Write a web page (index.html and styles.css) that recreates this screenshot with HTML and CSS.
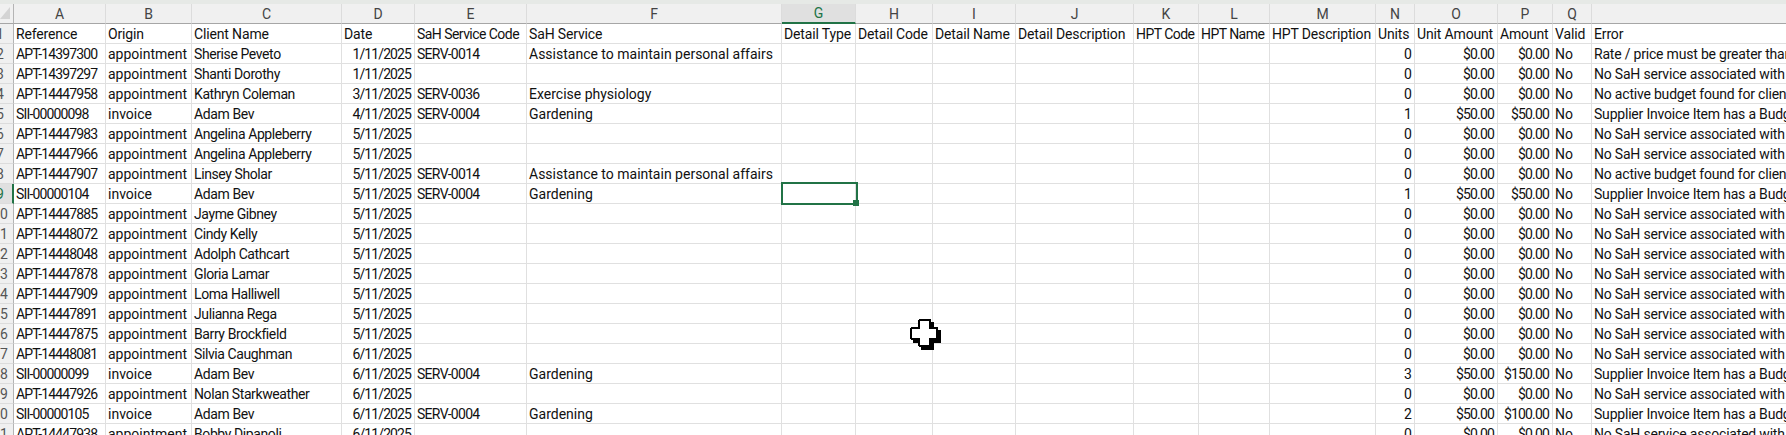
FILE: index.html
```html
<!DOCTYPE html>
<html lang="en">
<head>
<meta charset="utf-8">
<title>Sheet</title>
<link rel="stylesheet" href="styles.css">
</head>
<body>
<div class="band"></div>
<div class="sheet">
<table class="grid">
<colgroup>
<col class="c-rh"><col class="c-a"><col class="c-b"><col class="c-c"><col class="c-d"><col class="c-e"><col class="c-f"><col class="c-g"><col class="c-h"><col class="c-i"><col class="c-j"><col class="c-k"><col class="c-l"><col class="c-m"><col class="c-n"><col class="c-o"><col class="c-p"><col class="c-q"><col class="c-r">
</colgroup>
<thead>
<tr>
<th class="corner"><svg class="tri" width="11" height="13" viewBox="0 0 11 13"><polygon points="10,0 10,12 0,12" fill="#d4d4d4"/></svg></th>
<th>A</th><th>B</th><th>C</th><th>D</th><th>E</th><th>F</th><th class="on">G</th><th>H</th><th>I</th><th>J</th><th>K</th><th>L</th><th>M</th><th>N</th><th>O</th><th>P</th><th>Q</th><th></th>
</tr>
</thead>
<tbody>
<tr><th class="rh"><span>1</span></th><td>Reference</td><td>Origin</td><td>Client Name</td><td>Date</td><td>SaH Service Code</td><td>SaH Service</td><td>Detail Type</td><td>Detail Code</td><td>Detail Name</td><td>Detail Description</td><td>HPT Code</td><td>HPT Name</td><td>HPT Description</td><td>Units</td><td>Unit Amount</td><td>Amount</td><td>Valid</td><td>Error</td></tr>
<tr><th class="rh"><span>2</span></th><td>APT-14397300</td><td>appointment</td><td>Sherise Peveto</td><td class="n">1/11/2025</td><td>SERV-0014</td><td>Assistance to maintain personal affairs</td><td></td><td></td><td></td><td></td><td></td><td></td><td></td><td class="n">0</td><td class="n">$0.00</td><td class="n">$0.00</td><td>No</td><td>Rate / price must be greater than 0</td></tr>
<tr><th class="rh"><span>3</span></th><td>APT-14397297</td><td>appointment</td><td>Shanti Dorothy</td><td class="n">1/11/2025</td><td></td><td></td><td></td><td></td><td></td><td></td><td></td><td></td><td></td><td class="n">0</td><td class="n">$0.00</td><td class="n">$0.00</td><td>No</td><td>No SaH service associated with this item</td></tr>
<tr><th class="rh"><span>4</span></th><td>APT-14447958</td><td>appointment</td><td>Kathryn Coleman</td><td class="n">3/11/2025</td><td>SERV-0036</td><td>Exercise physiology</td><td></td><td></td><td></td><td></td><td></td><td></td><td></td><td class="n">0</td><td class="n">$0.00</td><td class="n">$0.00</td><td>No</td><td>No active budget found for client</td></tr>
<tr><th class="rh"><span>5</span></th><td>SII-00000098</td><td>invoice</td><td>Adam Bev</td><td class="n">4/11/2025</td><td>SERV-0004</td><td>Gardening</td><td></td><td></td><td></td><td></td><td></td><td></td><td></td><td class="n">1</td><td class="n">$50.00</td><td class="n">$50.00</td><td>No</td><td>Supplier Invoice Item has a Budget</td></tr>
<tr><th class="rh"><span>6</span></th><td>APT-14447983</td><td>appointment</td><td>Angelina Appleberry</td><td class="n">5/11/2025</td><td></td><td></td><td></td><td></td><td></td><td></td><td></td><td></td><td></td><td class="n">0</td><td class="n">$0.00</td><td class="n">$0.00</td><td>No</td><td>No SaH service associated with this item</td></tr>
<tr><th class="rh"><span>7</span></th><td>APT-14447966</td><td>appointment</td><td>Angelina Appleberry</td><td class="n">5/11/2025</td><td></td><td></td><td></td><td></td><td></td><td></td><td></td><td></td><td></td><td class="n">0</td><td class="n">$0.00</td><td class="n">$0.00</td><td>No</td><td>No SaH service associated with this item</td></tr>
<tr><th class="rh"><span>8</span></th><td>APT-14447907</td><td>appointment</td><td>Linsey Sholar</td><td class="n">5/11/2025</td><td>SERV-0014</td><td>Assistance to maintain personal affairs</td><td></td><td></td><td></td><td></td><td></td><td></td><td></td><td class="n">0</td><td class="n">$0.00</td><td class="n">$0.00</td><td>No</td><td>No active budget found for client</td></tr>
<tr><th class="rh active"><span>9</span></th><td>SII-00000104</td><td>invoice</td><td>Adam Bev</td><td class="n">5/11/2025</td><td>SERV-0004</td><td>Gardening</td><td class="sel"><div class="selbox"><div class="handle"></div></div></td><td></td><td></td><td></td><td></td><td></td><td></td><td class="n">1</td><td class="n">$50.00</td><td class="n">$50.00</td><td>No</td><td>Supplier Invoice Item has a Budget</td></tr>
<tr><th class="rh"><span>10</span></th><td>APT-14447885</td><td>appointment</td><td>Jayme Gibney</td><td class="n">5/11/2025</td><td></td><td></td><td></td><td></td><td></td><td></td><td></td><td></td><td></td><td class="n">0</td><td class="n">$0.00</td><td class="n">$0.00</td><td>No</td><td>No SaH service associated with this item</td></tr>
<tr><th class="rh"><span>11</span></th><td>APT-14448072</td><td>appointment</td><td>Cindy Kelly</td><td class="n">5/11/2025</td><td></td><td></td><td></td><td></td><td></td><td></td><td></td><td></td><td></td><td class="n">0</td><td class="n">$0.00</td><td class="n">$0.00</td><td>No</td><td>No SaH service associated with this item</td></tr>
<tr><th class="rh"><span>12</span></th><td>APT-14448048</td><td>appointment</td><td>Adolph Cathcart</td><td class="n">5/11/2025</td><td></td><td></td><td></td><td></td><td></td><td></td><td></td><td></td><td></td><td class="n">0</td><td class="n">$0.00</td><td class="n">$0.00</td><td>No</td><td>No SaH service associated with this item</td></tr>
<tr><th class="rh"><span>13</span></th><td>APT-14447878</td><td>appointment</td><td>Gloria Lamar</td><td class="n">5/11/2025</td><td></td><td></td><td></td><td></td><td></td><td></td><td></td><td></td><td></td><td class="n">0</td><td class="n">$0.00</td><td class="n">$0.00</td><td>No</td><td>No SaH service associated with this item</td></tr>
<tr><th class="rh"><span>14</span></th><td>APT-14447909</td><td>appointment</td><td>Loma Halliwell</td><td class="n">5/11/2025</td><td></td><td></td><td></td><td></td><td></td><td></td><td></td><td></td><td></td><td class="n">0</td><td class="n">$0.00</td><td class="n">$0.00</td><td>No</td><td>No SaH service associated with this item</td></tr>
<tr><th class="rh"><span>15</span></th><td>APT-14447891</td><td>appointment</td><td>Julianna Rega</td><td class="n">5/11/2025</td><td></td><td></td><td></td><td></td><td></td><td></td><td></td><td></td><td></td><td class="n">0</td><td class="n">$0.00</td><td class="n">$0.00</td><td>No</td><td>No SaH service associated with this item</td></tr>
<tr><th class="rh"><span>16</span></th><td>APT-14447875</td><td>appointment</td><td>Barry Brockfield</td><td class="n">5/11/2025</td><td></td><td></td><td></td><td></td><td></td><td></td><td></td><td></td><td></td><td class="n">0</td><td class="n">$0.00</td><td class="n">$0.00</td><td>No</td><td>No SaH service associated with this item</td></tr>
<tr><th class="rh"><span>17</span></th><td>APT-14448081</td><td>appointment</td><td>Silvia Caughman</td><td class="n">6/11/2025</td><td></td><td></td><td></td><td></td><td></td><td></td><td></td><td></td><td></td><td class="n">0</td><td class="n">$0.00</td><td class="n">$0.00</td><td>No</td><td>No SaH service associated with this item</td></tr>
<tr><th class="rh"><span>18</span></th><td>SII-00000099</td><td>invoice</td><td>Adam Bev</td><td class="n">6/11/2025</td><td>SERV-0004</td><td>Gardening</td><td></td><td></td><td></td><td></td><td></td><td></td><td></td><td class="n">3</td><td class="n">$50.00</td><td class="n">$150.00</td><td>No</td><td>Supplier Invoice Item has a Budget</td></tr>
<tr><th class="rh"><span>19</span></th><td>APT-14447926</td><td>appointment</td><td>Nolan Starkweather</td><td class="n">6/11/2025</td><td></td><td></td><td></td><td></td><td></td><td></td><td></td><td></td><td></td><td class="n">0</td><td class="n">$0.00</td><td class="n">$0.00</td><td>No</td><td>No SaH service associated with this item</td></tr>
<tr><th class="rh"><span>20</span></th><td>SII-00000105</td><td>invoice</td><td>Adam Bev</td><td class="n">6/11/2025</td><td>SERV-0004</td><td>Gardening</td><td></td><td></td><td></td><td></td><td></td><td></td><td></td><td class="n">2</td><td class="n">$50.00</td><td class="n">$100.00</td><td>No</td><td>Supplier Invoice Item has a Budget</td></tr>
<tr><th class="rh"><span>21</span></th><td>APT-14447938</td><td>appointment</td><td>Bobby Dipanoli</td><td class="n">6/11/2025</td><td></td><td></td><td></td><td></td><td></td><td></td><td></td><td></td><td></td><td class="n">0</td><td class="n">$0.00</td><td class="n">$0.00</td><td>No</td><td>No SaH service associated with this item</td></tr>
</tbody>
</table>
<svg class="cursor" width="31" height="31" viewBox="0 0 31 31" shape-rendering="crispEdges">
<polygon fill="#000" points="11,3 24,3 24,11 31,11 31,24 24,24 24,31 11,31 11,24 3,24 3,11 11,11"/>
<polygon fill="#000" points="9,0 20,0 21,1 21,8 27,8 28,9 28,20 27,21 21,21 21,27 20,28 9,28 8,27 8,21 1,21 0,20 0,9 1,8 8,8 8,1"/>
<polygon fill="#fff" points="10,2 19,2 19,10 26,10 26,19 19,19 19,26 10,26 10,19 2,19 2,10 10,10"/>
</svg>
</div>
</body>
</html>
```

FILE: styles.css
```css
html, body {
  margin: 0;
  height: 435px;
  overflow: hidden;
  background: #fff;
}

.band {
  height: 4px;
  background: #e6e9e6;
}

.sheet {
  position: relative;
}

.grid {
  table-layout: fixed;
  border-collapse: separate;
  border-spacing: 0;
  width: 1787px;
  font-family: "Roboto", "Liberation Sans", sans-serif;
  font-size: 14px;
  line-height: 18px;
  color: #111;
}

.c-rh { width: 14px; }
.c-a { width: 92px; }
.c-b { width: 86px; }
.c-c { width: 150px; }
.c-d { width: 73px; }
.c-e { width: 112px; }
.c-f { width: 255px; }
.c-g { width: 74px; }
.c-h { width: 77px; }
.c-i { width: 83px; }
.c-j { width: 118px; }
.c-k { width: 65px; }
.c-l { width: 71px; }
.c-m { width: 106px; }
.c-n { width: 39px; }
.c-o { width: 83px; }
.c-p { width: 55px; }
.c-q { width: 39px; }
.c-r { width: 196px; }

thead th {
  box-sizing: border-box;
  height: 20px;
  padding: 0;
  background: #f0f0f0;
  border-right: 1px solid #dcdcdc;
  border-bottom: 1px solid #a6a6a6;
  font-weight: normal;
  text-align: center;
  color: #444;
}

thead th.corner {
  position: relative;
  border-right: 1px solid #b4b4b4;
}

.tri {
  position: absolute;
  left: 0;
  top: 3px;
}

thead th.on {
  background: #e0e0e0;
  color: #217346;
  border-bottom: 2px solid #217346;
  line-height: 17px;
}

tbody td {
  box-sizing: border-box;
  height: 20px;
  padding: 1px 2px 0;
  border-right: 1px solid #e0e0e0;
  border-bottom: 1px solid #e0e0e0;
  white-space: nowrap;
}

tbody td.n {
  text-align: right;
  padding-right: 3px;
}

/* The sheet's narrow face is approximated by tightening each column. */
tbody td:nth-child(2) { letter-spacing: -0.85px; }
tbody td:nth-child(4) { letter-spacing: -0.4px; }
tbody td:nth-child(5) { letter-spacing: -0.9px; }
tbody td:nth-child(6) { letter-spacing: -0.7px; }
tbody td:nth-child(15),
tbody td:nth-child(16),
tbody td:nth-child(17) { letter-spacing: -0.85px; }
tbody td:nth-child(19) { letter-spacing: -0.2px; }

tbody tr:first-child td { letter-spacing: -0.15px; }
tbody tr:first-child td:nth-child(6),
tbody tr:first-child td:nth-child(12),
tbody tr:first-child td:nth-child(13) { letter-spacing: -0.55px; }

tbody td.sel {
  position: relative;
  padding: 0;
}

.selbox {
  position: absolute;
  left: -1px;
  top: -2px;
  right: -3px;
  bottom: -2px;
  border: 2px solid #217346;
}

.handle {
  position: absolute;
  right: -3px;
  bottom: -3px;
  width: 6px;
  height: 6px;
  background: #217346;
}

.rh {
  box-sizing: border-box;
  height: 20px;
  padding: 1px 0 0;
  overflow: hidden;
  background: #f0f0f0;
  border-right: 1px solid #b4b4b4;
  border-bottom: 1px solid #dcdcdc;
  font-weight: normal;
  color: #555;
}

.rh span {
  display: block;
  width: 26px;
  margin-left: -13px;
  text-align: center;
}

.rh.active {
  background: #e0e0e0;
  color: #217346;
  border-right: 2px solid #217346;
}

.cursor {
  position: absolute;
  left: 910px;
  top: 315px;
}
```
